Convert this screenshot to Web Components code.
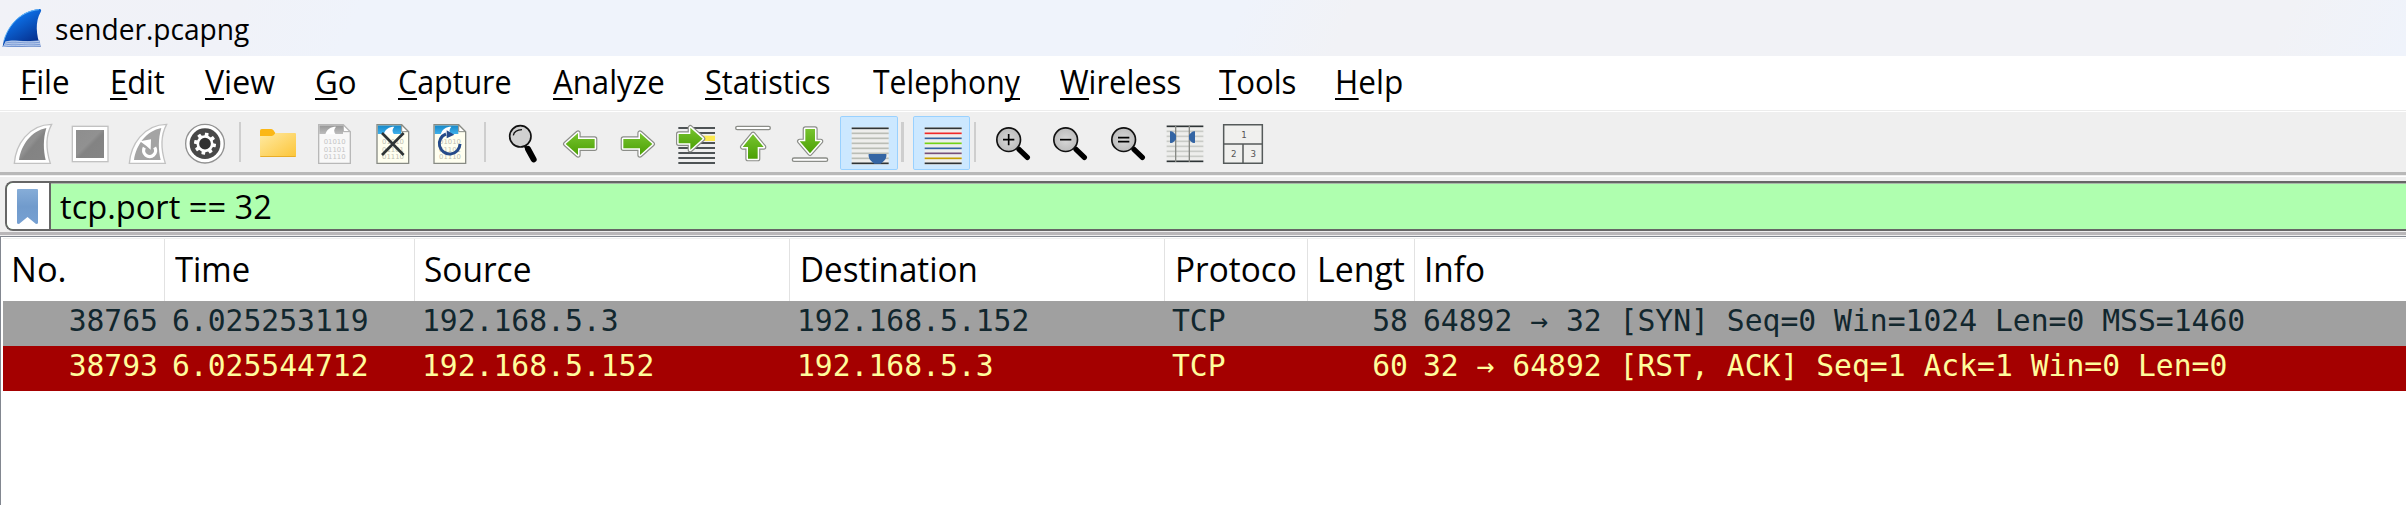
<!DOCTYPE html>
<html lang="en">
<head>
<meta charset="utf-8">
<title>sender.pcapng</title>
<style>
html,body{margin:0;padding:0;height:505px;overflow:hidden;background:#fff}
body{font-family:"Open Sans","Noto Sans",sans-serif;color:#000}
</style>
</head>
<body>
<capture-window></capture-window>
<script>
// Sets a text run to a given advance width.
class FitText extends HTMLElement{
  connectedCallback(){
    const r=this.shadowRoot||this.attachShadow({mode:'open'});
    const key=this.getAttribute('key');
    r.innerHTML=`<style>:host{display:block;white-space:pre}span{display:inline-block;transform-origin:0 0;white-space:pre}
u{text-decoration:none;background:linear-gradient(#000,#000) 0 calc(100% - 3px)/100% 2px no-repeat}</style><span></span>`;
    const s=r.querySelector('span'),t=this.getAttribute('text'),i=key===null?-1:+key;
    if(i<0)s.textContent=t;
    else{const u=document.createElement('u');u.textContent=t[i];s.append(t.slice(0,i),u,t.slice(i+1));}
    const w=+this.getAttribute('w');
    if(w)s.style.transform=`scaleX(${w/s.offsetWidth})`;
  }
}
customElements.define('fit-text',FitText);

class TitleBar extends HTMLElement{
  constructor(){super();this.attachShadow({mode:'open'}).innerHTML=`<style>
:host{display:flex;height:56px;line-height:58px;font-size:30px;background:linear-gradient(115deg,#f1f2f7 0,#f0f2f8 220px,#eff3fb 330px,#eff3fb 1130px,#f1f2f6 1230px,#f1f2f6 2080px,#eff3fb 2200px)}
svg{width:55px;height:56px;flex:none}</style>
<svg viewBox="0 0 165 168"><defs><linearGradient id="f" x1="0" y1="0" x2=".6" y2="1"><stop offset="0" stop-color="#2b9cf5"/><stop offset=".4" stop-color="#0b68dc"/><stop offset="1" stop-color="#06308e"/></linearGradient></defs>
<path d="M8 141C14 92 52 32 119 27Q126 28 122 36C105 65 108 105 122 140Z" fill="url(#f)"/>
<path d="M12 122C20 88 54 34 117 29" fill="none" stroke="#62b6f8" stroke-width="3"/>
<path d="M8 141L17 124C45 116 62 128 119 121L122 140Z" fill="#7c9cd6"/>
<path d="M15 127C45 118 62 130 118 124M12 133C45 124 72 136 120 130M9 139C45 131 70 140 121 137" fill="none" stroke="#dde7f7" stroke-width="2"/></svg>
<fit-text text="sender.pcapng" w="194"></fit-text>`;}
}
customElements.define('title-bar',TitleBar);

class MenuBar extends HTMLElement{
  constructor(){super();
    const m=[['File',20,50,0],['Edit',110,55,0],['View',205,70,0],['Go',315,42,0],['Capture',398,114,0],['Analyze',553,112,0],['Statistics',705,126,0],['Telephony',873,147,8],['Wireless',1060,121,0],['Tools',1219,77,0],['Help',1335,68,0]];
    this.attachShadow({mode:'open'}).innerHTML=`<style>
:host{display:flex;line-height:52px;font-size:32px;padding-left:20px;background:#fff;border-bottom:1px solid #ececec;box-sizing:border-box;height:55px;margin-bottom:1px}
fit-text{flex:none}</style>`+m.map((a,i)=>`<fit-text text="${a[0]}" w="${a[2]}" key="${a[3]}" style="width:${(m[i+1]?m[i+1][1]:1440)-a[1]}px"></fit-text>`).join('');}
}
customElements.define('menu-bar',MenuBar);

const fin=(x,fill)=>`<g transform="translate(${x})"><path d="M43 160C47 105 85 44 155 43C135 80 138 120 151 160Z" fill="#fff" stroke="#c2c2c2" stroke-width="4"/><path d="M57 150C63 105 95 62 139 54C129 88 130 120 137 150Z" fill="${fill}"/></g>`;
const sep=(x,w)=>`<rect x="${x}" y="36" width="${w}" height="120" fill="#cecece"/>`;
const doc=(x,g)=>`<path d="M${x+2} 44H${x+76}L${x+97} 65V160H${x+2}Z" fill="${g?'#f8f8f8':'#fffff0'}"/><path d="M${x+4} 46H${x+75}V72H${x+4}Z" fill="url(#${g?'dg':'db'})"/><path d="M${x+22} 73C${x+26} 58 ${x+38} 50 ${x+54} 50C${x+47} 58 ${x+47} 65 ${x+53} 73Z" fill="#fff"/><path d="M${x+76} 44V65H${x+97}" fill="#fff" stroke="${g?'#aaa':'#888b84'}" stroke-width="3"/><path d="M${x+2} 44H${x+76}L${x+97} 65V160H${x+2}Z" fill="none" stroke="${g?'#b8b8b8':'#888b84'}" stroke-width="4"/><g font-family="DejaVu Sans,sans-serif" font-size="20" fill="${g?'#c4c4c4':'#bdbdb0'}"><text x="${x+17}" y="103" textLength="66" lengthAdjust="spacingAndGlyphs">01010</text><text x="${x+17}" y="125" textLength="66" lengthAdjust="spacingAndGlyphs">01101</text><text x="${x+17}" y="147" textLength="66" lengthAdjust="spacingAndGlyphs">01110</text></g>`;
const arrow=d=>`<path d="${d}" fill="#fff" stroke="#8b8d88" stroke-width="16" stroke-linejoin="round"/><path d="${d}" fill="#fff" stroke="#fff" stroke-width="9" stroke-linejoin="round"/><path d="${d}" fill="url(#ga)"/>`;
const lines=(x,w,a)=>a.map(([y,c])=>`<rect x="${x}" y="${y-2.5}" width="${w}" height="5" fill="${c}"/>`).join('');
const mag=(x,s)=>`<path d="M${x+31} 30L${x+56} 54" transform="translate(0 88)" stroke="#000" stroke-width="16" stroke-linecap="round"/><path d="M${x+22} 109L${x+32} 119" stroke="#000" stroke-width="6"/><circle cx="${x}" cy="89" r="35.5" fill="url(#gm)" stroke="#111" stroke-width="5"/><path d="${s}" transform="translate(${x} 89)" stroke="#000" stroke-width="5"/>`;
const gearTeeth=Array.from({length:8},(_,i)=>`<rect x="609.5" y="68" width="11" height="13" rx="2" fill="#fff" transform="rotate(${i*45+10} 615 101)"/>`).join('');
const D='#2e3436',G='#babdb6';
// Each entry: left edge, width (in thirds of a pixel) and drawing.
const icons=[
 [0,186,fin(0,'url(#gg)')],
 [186,174,`<rect x="217" y="49" width="107" height="106" fill="#fff" stroke="#c2c2c2" stroke-width="4"/><rect x="228" y="60" width="84" height="84" fill="url(#gg)"/>`],
 [360,168,fin(345,'#a4a4a4')+`<path d="M433 113A18 18 0 1 0 464 112" fill="none" stroke="#fff" stroke-width="10"/><path d="M420 94L453 88L452 119Q440 108 420 94Z" fill="#fff"/>`],
 [528,174,`<circle cx="615" cy="101" r="58" fill="#fff" stroke="#929292" stroke-width="4"/><circle cx="615" cy="101" r="46" fill="#484848"/>${gearTeeth}<circle cx="615" cy="101" r="21.5" fill="#303030" stroke="#fff" stroke-width="8"/>`],
 [702,39,sep(717,6)],
 [21,180,`<path d="M60 62Q60 57 65 57H93Q97 57 100 61L106 69V85H60Z" fill="#fbb716"/><path d="M60 78H95Q100 78 104 72L107 69H165Q168 69 168 72V137Q168 141 164 141H64Q60 141 60 137Z" fill="url(#gf)"/><path d="M61 139.5H167" stroke="#e9ad27" stroke-width="3"/>`],
 [201,180,doc(234,1)],
 [381,174,doc(409,0)+`<path d="M426 69L491 135M491 69L426 135" stroke="#2e3436" stroke-width="8"/>`],
 [555,159,doc(580,0)+`<path d="M618 72A31 31 0 1 0 660 102" fill="none" stroke="#254a8a" stroke-width="9"/><path d="M620 61L643 74L620 85Z" fill="#254a8a"/>`],
 [714,51,sep(732,6)],
 [15,165,`<path d="M105 108L115 124" stroke="#000" stroke-width="8"/><path d="M114 117L131 148" stroke="#000" stroke-width="18" stroke-linecap="round"/><circle cx="91" cy="79" r="32" fill="#d0d0d0" stroke="#111" stroke-width="5"/><path d="M70 76Q73 60 96 59" fill="none" stroke="#111" stroke-width="4"/>`],
 [180,180,arrow('M227 102L264 69V87H314V115H264V135Z')],
 [360,174,arrow('M487 102L450 69V87H400V115H450V135Z')],
 [534,171,lines(565,110,[[54,D],[69,D],[84,D],[99,D],[114,D],[129,D],[144,D],[159,D]])+`<rect x="625" y="77" width="50" height="16" fill="#fce94f"/>`+arrow('M638 86L601 53V72H566V100H601V119Z')],
 [-45,174,`<rect x="-13" y="49" width="104" height="10" rx="5" fill="#fff" stroke="#8b8d88" stroke-width="4"/>`+arrow('M39 73L8 111H24V146H53V111H71Z')],
 [129,165,`<rect x="157" y="144" width="106" height="10" rx="5" fill="#fff" stroke="#8b8d88" stroke-width="4"/>`+arrow('M210 130L179 94H196V57H225V94H242Z')],
 [294,186,`<rect x="301.5" y="19.5" width="171" height="159" rx="4" fill="#cce8ff" stroke="#99d1ff" stroke-width="3"/><rect x="335" y="52" width="111" height="112" fill="#eeeeec"/>`+lines(335,111,[[55,D],[70,G],[85,G],[100,G],[115,G],[130,G],[145,G],[160,D]])+`<path d="M386 132H439Q443 147 422 161H403Q382 147 386 132Z" fill="#3465a4"/>`],
 [480,24,sep(483,9)],
 [504,192,`<rect x="520.5" y="19.5" width="168" height="159" rx="4" fill="#cce8ff" stroke="#99d1ff" stroke-width="3"/><rect x="554" y="52" width="111" height="112" fill="#eeeeec"/>`+lines(554,111,[[55,D],[70,'#ef2929'],[85,'#3465a4'],[100,'#73d216'],[115,'#3465a4'],[130,'#75507b'],[145,'#c4a000'],[160,D]])],
 [696,24,sep(702,6)],
 [0,195,mag(86,'M-17 0H17M0-17V17')],
 [195,174,mag(257,'M-17 0H17')],
 [369,171,mag(431,'M-17-6H17M-17 6H17')],
 [540,165,`<rect x="560" y="46" width="110" height="112" fill="#eeeeec"/>`+lines(560,110,[[49,D],[64,'#c9cbc7'],[79,'#c9cbc7'],[94,'#c9cbc7'],[109,'#c9cbc7'],[124,'#c9cbc7'],[139,'#c9cbc7'],[154,D]])+`<path d="M587 48V156M628 48V156" stroke="#888a85" stroke-width="4"/><path d="M570 64Q578 61 588 75V88Q578 102 570 98ZM645 64Q637 61 627 75V88Q637 102 645 98Z" fill="#3465a4"/>`],
 [705,180,`<path d="M731 44H847V160H731ZM731 102H847M789 102V160" fill="#f0f0ee" stroke="#555a5a" stroke-width="4.5"/><g font-family="DejaVu Sans,sans-serif" font-size="26" fill="#555" text-anchor="middle"><text x="792" y="83">1</text><text x="761" y="140">2</text><text x="820" y="140">3</text></g>`]
];
const defs=`<defs>
<linearGradient id="gg" x1="0" y1="0" x2="1" y2="1"><stop offset="0" stop-color="#8e8e8e"/><stop offset=".45" stop-color="#919191"/><stop offset=".55" stop-color="#838383"/><stop offset="1" stop-color="#858585"/></linearGradient>
<linearGradient id="ga" x1="0" y1="0" x2="0" y2="1"><stop offset="0" stop-color="#77c42f"/><stop offset="1" stop-color="#4ca005"/></linearGradient>
<linearGradient id="gf" x1="0" y1="0" x2="1" y2="1"><stop offset="0" stop-color="#ffeaa3"/><stop offset="1" stop-color="#fcc538"/></linearGradient>
<linearGradient id="db" x1="0" y1="0" x2="0" y2="1"><stop offset="0" stop-color="#1588c9"/><stop offset="1" stop-color="#40b0ea"/></linearGradient>
<linearGradient id="dg" x1="0" y1="0" x2="0" y2="1"><stop offset="0" stop-color="#969696"/><stop offset="1" stop-color="#bdbdbd"/></linearGradient>
<radialGradient id="gm"><stop offset="0" stop-color="#d8d8d8"/><stop offset="1" stop-color="#bcbcbc"/></radialGradient></defs>`;

class ToolIcon extends HTMLElement{
  connectedCallback(){
    const [x,w,b]=icons[+this.getAttribute('n')];
    this.attachShadow({mode:'open'}).innerHTML=`<style>:host{display:block;flex:none;height:60px}svg{display:block}</style><svg width="${w/3}" height="60" viewBox="${x} 6 ${w} 180">${defs}${b}</svg>`;
  }
}
customElements.define('tool-icon',ToolIcon);

class ToolBar extends HTMLElement{
  constructor(){super();this.attachShadow({mode:'open'}).innerHTML=`<style>:host{display:flex;height:60px;background:#efefef;border-bottom:3px solid #b8b8b8}</style>`+icons.map((_,i)=>`<tool-icon n="${i}"></tool-icon>`).join('');}
}
customElements.define('tool-bar',ToolBar);

class FilterBar extends HTMLElement{
  constructor(){super();this.attachShadow({mode:'open'}).innerHTML=`<style>
:host{display:block;height:60px;box-sizing:border-box;background:#efefef;border-top:1px solid #efefef;box-shadow:inset 0 1px #fff;padding:5px 0 0 5px;border-bottom:3px solid #b9b7b9}
.field{display:flex;height:50px;box-sizing:border-box;border:2px solid #666;border-right:0;border-radius:8px 0 0 8px;background:#afffaf;overflow:hidden}
.mark{width:42px;background:#fff;border-right:2px solid #666;flex:none}
svg{display:block;width:42px;height:46px}
.text{flex:1;padding-left:9px;font-size:32px;line-height:46px;border-top:1px solid #aab8aa}
</style><div class="field"><div class="mark"><svg viewBox="0 0 42 46"><defs><linearGradient id="b" x1="0" y1="0" x2="0" y2="1"><stop offset="0" stop-color="#86add8"/><stop offset=".5" stop-color="#719bcc"/><stop offset="1" stop-color="#76a0d2"/></linearGradient></defs><path d="M10 7Q10 6 11 6H30Q31 6 31 7V40Q31 41 29 41L20.500 34L12 41Q10 41 10 40Z" fill="url(#b)"/></svg></div><div class="text"><fit-text text="tcp.port == 32" w="212"></fit-text></div></div>`;}
}
customElements.define('filter-bar',FilterBar);

class PacketRow extends HTMLElement{
  connectedCallback(){this.attachShadow({mode:'open'}).innerHTML=`<style>
:host{display:grid;grid-template-columns:162px 250px 375px 375px 143px 107px 1fr;height:45px;line-height:39px;font-family:"DejaVu Sans Mono",monospace;font-size:29.7px;white-space:pre}
div{padding-left:7px}div:last-child{padding-left:8px}div.r{text-align:right;padding:0 7px 0 0}</style>`+this.getAttribute('cells').split('|').map((c,i)=>`<div class="${i==0||i==5?'r':''}">${c}</div>`).join('');}
}
customElements.define('packet-row',PacketRow);

class PacketTable extends HTMLElement{
  constructor(){super();
    const h=[['No.',9,56,162],['Time',11,75,250],['Source',10,107,375],['Destination',11,178,375],['Protoco',11,122,143],['Lengt',10,88,107],['Info',10,61,0]];
    this.attachShadow({mode:'open'}).innerHTML=`<style>
:host{display:block;margin-top:1px;height:269px;box-sizing:border-box;border-top:1px solid #828790;border-left:1px solid #828790;padding:1px 0 0 2px;background:#fff}
.head{display:flex;height:63px;box-sizing:border-box;border-top:1px solid #eef0ee;line-height:59px;font-size:35px}
.head div{box-sizing:border-box;flex:none;border-right:1px solid #e2e2e2}
.head div:last-child{flex:1;border:0}
.a{background:#a0a0a0;color:#12272e}.b{background:#a40000;color:#fffc9c}</style>
<div class="head">${h.map(a=>`<div style="${a[3]?`width:${a[3]}px;`:''}padding-left:${a[1]-1}px"><fit-text text="${a[0]}" w="${a[2]}"></fit-text></div>`).join('')}</div>
<packet-row class="a" cells="38765|6.025253119|192.168.5.3|192.168.5.152|TCP|58|64892 → 32 [SYN] Seq=0 Win=1024 Len=0 MSS=1460"></packet-row>
<packet-row class="b" cells="38793|6.025544712|192.168.5.152|192.168.5.3|TCP|60|32 → 64892 [RST, ACK] Seq=1 Ack=1 Win=0 Len=0"></packet-row>`;}
}
customElements.define('packet-table',PacketTable);

class CaptureWindow extends HTMLElement{
  constructor(){super();this.attachShadow({mode:'open'}).innerHTML=`<style>:host{display:flex;flex-direction:column;height:505px;overflow:hidden;background:#fff}:host>*{flex-shrink:0}title-bar,menu-bar,tool-bar,filter-bar,packet-table{flex-shrink:0}packet-table{box-shadow:0 -1px #efefef}</style>
<title-bar></title-bar><menu-bar></menu-bar><tool-bar></tool-bar><filter-bar></filter-bar><packet-table></packet-table>`;}
}
customElements.define('capture-window',CaptureWindow);
</script>
</body>
</html>
